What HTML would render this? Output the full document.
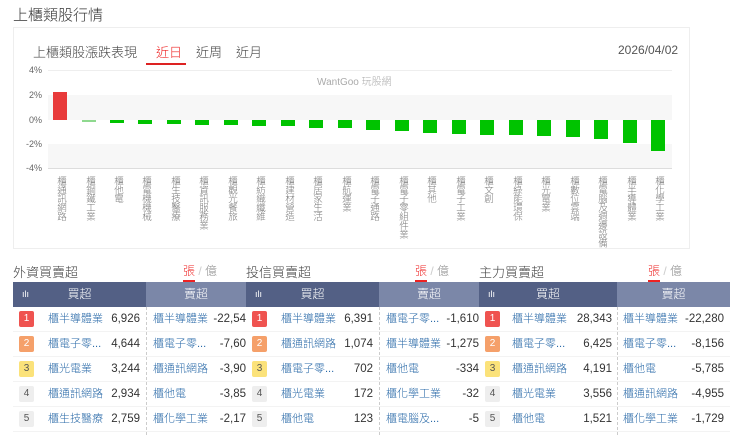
<!DOCTYPE html>
<html><head><meta charset="utf-8"><style>
*{margin:0;padding:0;box-sizing:border-box}
body{width:740px;height:440px;background:#fff;font-family:"Liberation Sans","Noto Sans CJK TC",sans-serif;position:relative;overflow:hidden;color:#333;font-weight:300}
.a{position:absolute}
.b{position:absolute;background:#00c300;width:14px}
.lbl{position:absolute;top:176px;writing-mode:vertical-rl;font-size:9.5px;line-height:10px;color:#777;letter-spacing:-0.6px}
.yl{position:absolute;left:18px;width:24px;text-align:right;font-size:9px;color:#666}
.tb{position:absolute;top:282px;height:155px}
.hd{position:absolute;top:0;height:25px;color:#fff;font-size:12px;line-height:25px;text-align:center;font-weight:300}
.row{position:absolute;height:25px;font-size:11.5px;line-height:25px;border-bottom:1px solid #f3f3f3}
.nm{color:#2a6aa8;position:absolute;font-size:11px}
.nv{position:absolute;text-align:right;color:#333;white-space:nowrap}
.rk{position:absolute;width:15px;height:16px;top:4px;font-size:10px;line-height:16px;text-align:center;border-radius:2px}
.t{position:absolute;top:262px;font-size:13px;color:#444;font-weight:300}
.u{position:absolute;top:262px;font-size:12px;color:#888}
.u b{color:#e22;font-weight:300;border-bottom:2px solid #e22;padding-bottom:2px}
</style></head><body>
<div class="a" style="left:13px;top:4px;font-size:15px;color:#333">上櫃類股行情</div>
<div class="a" style="left:13px;top:27px;width:677px;height:222px;border:1px solid #eee"></div>
<div class="a" style="left:33px;top:42px;font-size:13px;color:#444">上櫃類股漲跌表現</div>
<div class="a" style="left:156px;top:42px;font-size:13px;color:#e22">近日</div>
<div class="a" style="left:146px;top:63px;width:40px;height:2px;background:#d22"></div>
<div class="a" style="left:196px;top:42px;font-size:13px;color:#444">近周</div>
<div class="a" style="left:236px;top:42px;font-size:13px;color:#444">近月</div>
<div class="a" style="left:618px;top:43px;font-size:12px;color:#555">2026/04/02</div>
<div class="a" style="left:48px;top:70px;width:624px;height:1px;background:#eee"></div>
<div class="a" style="left:48px;top:95px;width:624px;height:25px;background:#f7f7f7"></div>
<div class="a" style="left:48px;top:144px;width:624px;height:24px;background:#f7f7f7"></div>
<div class="a" style="left:48px;top:168px;width:624px;height:1px;background:#ddd"></div>
<div class="a" style="left:317px;top:73px;font-size:10px;color:#aaa">WantGoo 玩股網</div>
<div class="yl" style="top:65px">4%</div>
<div class="yl" style="top:90px">2%</div>
<div class="yl" style="top:115px">0%</div>
<div class="yl" style="top:139px">-2%</div>
<div class="yl" style="top:163px">-4%</div>
<div class="b" style="left:53px;top:92px;height:28px;background:#e83a3a"></div>
<div class="b" style="left:82px;top:120px;height:1.5px;background:#8fd98f"></div>
<div class="b" style="left:110px;top:120px;height:3px"></div>
<div class="b" style="left:138px;top:120px;height:4px"></div>
<div class="b" style="left:167px;top:120px;height:4px"></div>
<div class="b" style="left:195px;top:120px;height:4.5px"></div>
<div class="b" style="left:224px;top:120px;height:5px"></div>
<div class="b" style="left:252px;top:120px;height:6px"></div>
<div class="b" style="left:281px;top:120px;height:6px"></div>
<div class="b" style="left:309px;top:120px;height:7.5px"></div>
<div class="b" style="left:338px;top:120px;height:8px"></div>
<div class="b" style="left:366px;top:120px;height:10px"></div>
<div class="b" style="left:395px;top:120px;height:11px"></div>
<div class="b" style="left:423px;top:120px;height:13px"></div>
<div class="b" style="left:452px;top:120px;height:13.5px"></div>
<div class="b" style="left:480px;top:120px;height:15px"></div>
<div class="b" style="left:509px;top:120px;height:15px"></div>
<div class="b" style="left:537px;top:120px;height:15.5px"></div>
<div class="b" style="left:566px;top:120px;height:17px"></div>
<div class="b" style="left:594px;top:120px;height:19px"></div>
<div class="b" style="left:623px;top:120px;height:23px"></div>
<div class="b" style="left:651px;top:120px;height:31px"></div>
<div class="lbl" style="left:55px">櫃通訊網路</div>
<div class="lbl" style="left:84px">櫃鋼鐵工業</div>
<div class="lbl" style="left:112px">櫃他電</div>
<div class="lbl" style="left:140px">櫃電機機械</div>
<div class="lbl" style="left:169px">櫃生技醫療</div>
<div class="lbl" style="left:197px">櫃資訊服務業</div>
<div class="lbl" style="left:226px">櫃觀光餐旅</div>
<div class="lbl" style="left:254px">櫃紡織纖維</div>
<div class="lbl" style="left:283px">櫃建材營造</div>
<div class="lbl" style="left:311px">櫃居家生活</div>
<div class="lbl" style="left:340px">櫃航運業</div>
<div class="lbl" style="left:368px">櫃電子通路</div>
<div class="lbl" style="left:397px">櫃電子零組件業</div>
<div class="lbl" style="left:425px">櫃其他</div>
<div class="lbl" style="left:454px">櫃電子工業</div>
<div class="lbl" style="left:482px">櫃文創</div>
<div class="lbl" style="left:511px">櫃綠能環保</div>
<div class="lbl" style="left:539px">櫃光電業</div>
<div class="lbl" style="left:568px">櫃數位雲端</div>
<div class="lbl" style="left:596px">櫃電腦及週邊設備</div>
<div class="lbl" style="left:625px">櫃半導體業</div>
<div class="lbl" style="left:653px">櫃化學工業</div>

<div class="t" style="left:13px">外資買賣超</div>
<div class="u" style="left:183px"><b>張</b> <span style="color:#ccc">/</span> 億</div>
<div class="t" style="left:246px">投信買賣超</div>
<div class="u" style="left:415px"><b>張</b> <span style="color:#ccc">/</span> 億</div>
<div class="t" style="left:479px">主力買賣超</div>
<div class="u" style="left:648px"><b>張</b> <span style="color:#ccc">/</span> 億</div>

<!-- table 1 -->
<div class="tb" style="left:13px;width:233px">
<div class="hd" style="left:0;width:133px;background:#536085"><span style="position:absolute;left:9px;font-size:9px">ılı</span>買超</div>
<div class="hd" style="left:133px;width:100px;background:#7b87a8">賣超</div>
<div class="a" style="left:133px;top:25px;width:0;height:128px;border-left:1px dashed #ccc"></div>
<div class="row" style="top:25px;width:233px"><div class="rk" style="left:6px;background:#ef5350;color:#fff">1</div><span class="nm" style="left:35px">櫃半導體業</span><span class="nv" style="left:90px;width:37px">6,926</span><span class="nm" style="left:140px">櫃半導體業</span><span class="nv" style="left:190px;width:43px;overflow:hidden">-22,54</span></div>
<div class="row" style="top:50px;width:233px"><div class="rk" style="left:6px;background:#f5a06a;color:#fff">2</div><span class="nm" style="left:35px">櫃電子零...</span><span class="nv" style="left:90px;width:37px">4,644</span><span class="nm" style="left:140px">櫃電子零...</span><span class="nv" style="left:190px;width:43px;overflow:hidden">-7,60</span></div>
<div class="row" style="top:75px;width:233px"><div class="rk" style="left:6px;background:#fbe27a;color:#555">3</div><span class="nm" style="left:35px">櫃光電業</span><span class="nv" style="left:90px;width:37px">3,244</span><span class="nm" style="left:140px">櫃通訊網路</span><span class="nv" style="left:190px;width:43px;overflow:hidden">-3,90</span></div>
<div class="row" style="top:100px;width:233px"><div class="rk" style="left:6px;background:#eee;color:#555">4</div><span class="nm" style="left:35px">櫃通訊網路</span><span class="nv" style="left:90px;width:37px">2,934</span><span class="nm" style="left:140px">櫃他電</span><span class="nv" style="left:190px;width:43px;overflow:hidden">-3,85</span></div>
<div class="row" style="top:125px;width:233px"><div class="rk" style="left:6px;background:#eee;color:#555">5</div><span class="nm" style="left:35px">櫃生技醫療</span><span class="nv" style="left:90px;width:37px">2,759</span><span class="nm" style="left:140px">櫃化學工業</span><span class="nv" style="left:190px;width:43px;overflow:hidden">-2,17</span></div>
</div>
<!-- table 2 -->
<div class="tb" style="left:246px;width:233px">
<div class="hd" style="left:0;width:133px;background:#536085"><span style="position:absolute;left:9px;font-size:9px">ılı</span>買超</div>
<div class="hd" style="left:133px;width:100px;background:#7b87a8">賣超</div>
<div class="a" style="left:133px;top:25px;width:0;height:128px;border-left:1px dashed #ccc"></div>
<div class="row" style="top:25px;width:233px"><div class="rk" style="left:6px;background:#ef5350;color:#fff">1</div><span class="nm" style="left:35px">櫃半導體業</span><span class="nv" style="left:90px;width:37px">6,391</span><span class="nm" style="left:140px">櫃電子零...</span><span class="nv" style="left:190px;width:43px;overflow:hidden">-1,610</span></div>
<div class="row" style="top:50px;width:233px"><div class="rk" style="left:6px;background:#f5a06a;color:#fff">2</div><span class="nm" style="left:35px">櫃通訊網路</span><span class="nv" style="left:90px;width:37px">1,074</span><span class="nm" style="left:140px">櫃半導體業</span><span class="nv" style="left:190px;width:43px;overflow:hidden">-1,275</span></div>
<div class="row" style="top:75px;width:233px"><div class="rk" style="left:6px;background:#fbe27a;color:#555">3</div><span class="nm" style="left:35px">櫃電子零...</span><span class="nv" style="left:90px;width:37px">702</span><span class="nm" style="left:140px">櫃他電</span><span class="nv" style="left:190px;width:43px;overflow:hidden">-334</span></div>
<div class="row" style="top:100px;width:233px"><div class="rk" style="left:6px;background:#eee;color:#555">4</div><span class="nm" style="left:35px">櫃光電業</span><span class="nv" style="left:90px;width:37px">172</span><span class="nm" style="left:140px">櫃化學工業</span><span class="nv" style="left:190px;width:43px;overflow:hidden">-32</span></div>
<div class="row" style="top:125px;width:233px"><div class="rk" style="left:6px;background:#eee;color:#555">5</div><span class="nm" style="left:35px">櫃他電</span><span class="nv" style="left:90px;width:37px">123</span><span class="nm" style="left:140px">櫃電腦及...</span><span class="nv" style="left:190px;width:43px;overflow:hidden">-5</span></div>
</div>
<!-- table 3 -->
<div class="tb" style="left:479px;width:251px">
<div class="hd" style="left:0;width:138px;background:#536085"><span style="position:absolute;left:9px;font-size:9px">ılı</span>買超</div>
<div class="hd" style="left:138px;width:113px;background:#7b87a8">賣超</div>
<div class="a" style="left:138px;top:25px;width:0;height:128px;border-left:1px dashed #ccc"></div>
<div class="row" style="top:25px;width:251px"><div class="rk" style="left:6px;background:#ef5350;color:#fff">1</div><span class="nm" style="left:33px">櫃半導體業</span><span class="nv" style="left:90px;width:43px">28,343</span><span class="nm" style="left:144px">櫃半導體業</span><span class="nv" style="left:190px;width:55px">-22,280</span></div>
<div class="row" style="top:50px;width:251px"><div class="rk" style="left:6px;background:#f5a06a;color:#fff">2</div><span class="nm" style="left:33px">櫃電子零...</span><span class="nv" style="left:90px;width:43px">6,425</span><span class="nm" style="left:144px">櫃電子零...</span><span class="nv" style="left:190px;width:55px">-8,156</span></div>
<div class="row" style="top:75px;width:251px"><div class="rk" style="left:6px;background:#fbe27a;color:#555">3</div><span class="nm" style="left:33px">櫃通訊網路</span><span class="nv" style="left:90px;width:43px">4,191</span><span class="nm" style="left:144px">櫃他電</span><span class="nv" style="left:190px;width:55px">-5,785</span></div>
<div class="row" style="top:100px;width:251px"><div class="rk" style="left:6px;background:#eee;color:#555">4</div><span class="nm" style="left:33px">櫃光電業</span><span class="nv" style="left:90px;width:43px">3,556</span><span class="nm" style="left:144px">櫃通訊網路</span><span class="nv" style="left:190px;width:55px">-4,955</span></div>
<div class="row" style="top:125px;width:251px"><div class="rk" style="left:6px;background:#eee;color:#555">5</div><span class="nm" style="left:33px">櫃他電</span><span class="nv" style="left:90px;width:43px">1,521</span><span class="nm" style="left:144px">櫃化學工業</span><span class="nv" style="left:190px;width:55px">-1,729</span></div>
</div>
</body></html>
